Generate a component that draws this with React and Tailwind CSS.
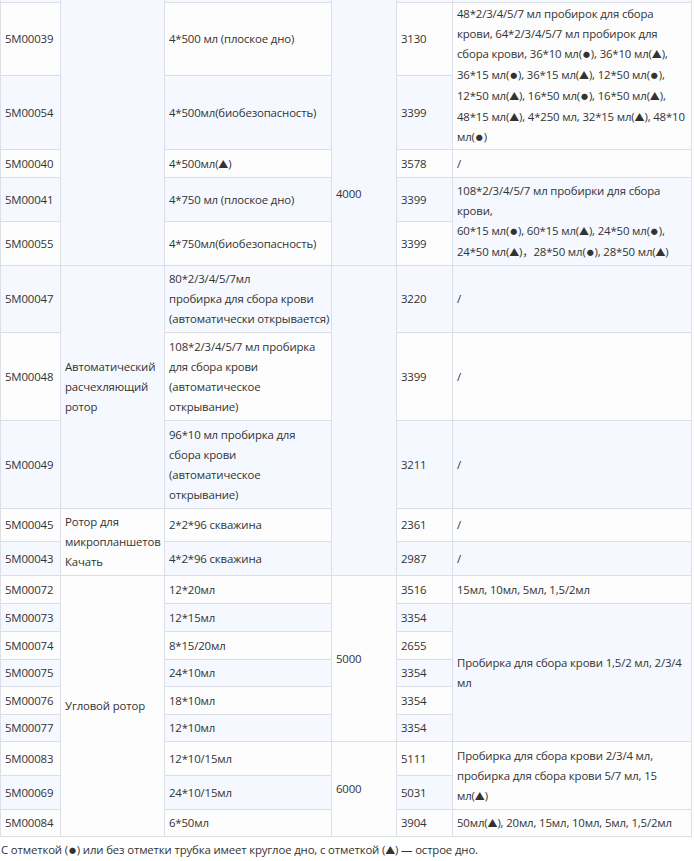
import React from 'react';

const WHITE = 'bg-[#fdfdfd]';
const BLUE = 'bg-[#f5f9ff]';

// rows in table order; each cell: [text, span, pin]
const rows = [
    { bg: BLUE, cells: [[''], ['', 'row-span-6'], [''], ['4000', 'row-span-6', 'pin'], [''], ['']] },
    {
        bg: WHITE,
        cells: [
            ['5M00039'],
            ['4*500 мл (плоское дно)'],
            ['3130'],
            [
                [
                    '48*2/3/4/5/7 мл пробирок для сбора',
                    'крови, 64*2/3/4/5/7 мл пробирок для',
                    'сбора крови, 36*10 мл(●), 36*10 мл(▲),',
                    '36*15 мл(●), 36*15 мл(▲), 12*50 мл(●),',
                    '12*50 мл(▲), 16*50 мл(●), 16*50 мл(▲),',
                    '48*15 мл(▲), 4*250 мл, 32*15 мл(▲), 48*10',
                    'мл(●)',
                ],
                'row-span-2',
            ],
        ],
    },
    { bg: BLUE, cells: [['5M00054'], ['4*500мл(биобезопасность)'], ['3399']] },
    { bg: WHITE, cells: [['5M00040'], ['4*500мл(▲)'], ['3578'], ['/']] },
    {
        bg: BLUE,
        cells: [
            ['5M00041'],
            ['4*750 мл (плоское дно)'],
            ['3399'],
            [
                [
                    '108*2/3/4/5/7 мл пробирки для сбора',
                    'крови,',
                    '60*15 мл(●), 60*15 мл(▲), 24*50 мл(●),',
                    '24*50 мл(▲)，28*50 мл(●), 28*50 мл(▲)',
                ],
                'row-span-2',
            ],
        ],
    },
    { bg: WHITE, cells: [['5M00055'], ['4*750мл(биобезопасность)'], ['3399']] },
    {
        bg: BLUE,
        cells: [
            ['5M00047'],
            [['Автоматический', 'расчехляющий', 'ротор'], 'row-span-3'],
            [['80*2/3/4/5/7мл', 'пробирка для сбора крови', '(автоматически открывается)']],
            ['', 'row-span-5'],
            ['3220'],
            ['/'],
        ],
    },
    {
        bg: WHITE,
        cells: [
            ['5M00048'],
            [['108*2/3/4/5/7 мл пробирка', 'для сбора крови', '(автоматическое', 'открывание)']],
            ['3399'],
            ['/'],
        ],
    },
    {
        bg: BLUE,
        cells: [
            ['5M00049'],
            [['96*10 мл пробирка для', 'сбора крови', '(автоматическое', 'открывание)']],
            ['3211'],
            ['/'],
        ],
    },
    {
        bg: WHITE,
        cells: [
            ['5M00045'],
            [['Ротор для', 'микропланшетов', 'Качать'], 'row-span-2'],
            ['2*2*96 скважина'],
            ['2361'],
            ['/'],
        ],
    },
    { bg: BLUE, cells: [['5M00043'], ['4*2*96 скважина'], ['2987'], ['/']] },
    {
        bg: WHITE,
        cells: [
            ['5M00072'],
            ['Угловой ротор', 'row-span-9'],
            ['12*20мл'],
            ['5000', 'row-span-6'],
            ['3516'],
            ['15мл, 10мл, 5мл, 1,5/2мл'],
        ],
    },
    {
        bg: BLUE,
        cells: [
            ['5M00073'],
            ['12*15мл'],
            ['3354'],
            [['Пробирка для сбора крови 1,5/2 мл, 2/3/4', 'мл'], 'row-span-5'],
        ],
    },
    { bg: WHITE, cells: [['5M00074'], ['8*15/20мл'], ['2655']] },
    { bg: BLUE, cells: [['5M00075'], ['24*10мл'], ['3354']] },
    { bg: WHITE, cells: [['5M00076'], ['18*10мл'], ['3354']] },
    { bg: BLUE, cells: [['5M00077'], ['12*10мл'], ['3354']] },
    {
        bg: WHITE,
        cells: [
            ['5M00083'],
            ['12*10/15мл'],
            ['6000', 'row-span-3'],
            ['5111'],
            [
                [
                    'Пробирка для сбора крови 2/3/4 мл,',
                    'пробирка для сбора крови 5/7 мл, 15',
                    'мл(▲)',
                ],
                'row-span-2',
            ],
        ],
    },
    { bg: BLUE, cells: [['5M00069'], ['24*10/15мл'], ['5031']] },
    { bg: WHITE, cells: [['5M00084'], ['6*50мл'], ['3904'], ['50мл(▲), 20мл, 15мл, 10мл, 5мл, 1,5/2мл']] },
];

// small round and triangle marks, sized like the original
function Marks({ text }) {
    const parts = text.split(/([●▲])/);
    return parts.map((p, i) => {
        if (p === '●') return <span key={i} className="text-[7px] align-[1px] px-[1px]">●</span>;
        if (p === '▲') return <span key={i} className="text-[10px]">▲</span>;
        return <React.Fragment key={i}>{p}</React.Fragment>;
    });
}

function Cell({ text, span, bg, pin }) {
    const lines = Array.isArray(text) ? text : [text];
    return (
        <div
            className={`${span || ''} ${bg} flex ${pin ? 'items-end pb-[61px]' : 'items-center'} border-r border-b border-[#dcdfe6] pl-[4px] pr-[2px] overflow-hidden`}
        >
            <div className="whitespace-nowrap leading-[20px]">
                {lines.map((l, i) => (
                    <div key={i}>
                        <Marks text={l} />
                    </div>
                ))}
            </div>
        </div>
    );
}

export default function App() {
    return (
        <div
            className="bg-white text-[#333] text-[11.4px] tracking-[-0.15px] w-[694px]"
            style={{ fontFamily: '"Open Sans", "Noto Sans", "Noto Sans CJK SC", sans-serif' }}
        >
            <div className="grid w-[692px] border-l border-[#dcdfe6] grid-cols-[60px_104px_167px_65px_56px_239px] grid-rows-[3px_73px_74px_28px_44px_44px_67px_88px_88px_33px_34px_28px_28px_28px_27px_28px_27px_34px_34px_27px]">
                {rows.map((row, ri) =>
                    row.cells.map((c, ci) => (
                        <Cell key={ri + '-' + ci} text={c[0]} span={c[1]} pin={c[2] === 'pin'} bg={row.bg} />
                    ))
                )}
            </div>
            <p className="mt-[3px] pl-[1px] leading-[20px]">
                <Marks text="С отметкой (●) или без отметки трубка имеет круглое дно, с отметкой (▲) — острое дно." />
            </p>
        </div>
    );
}
